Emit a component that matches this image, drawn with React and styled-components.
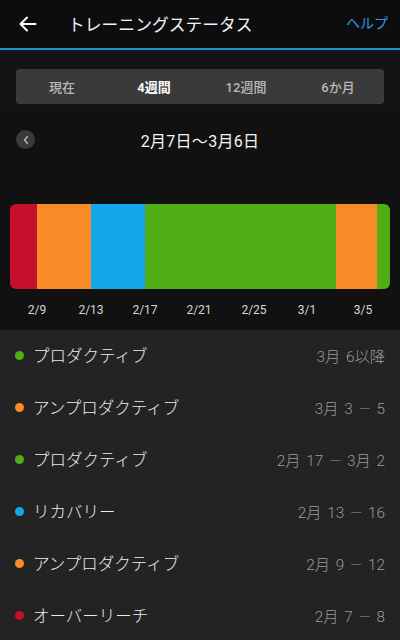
import React from "react";
import styled, { createGlobalStyle } from "styled-components";

const Global = createGlobalStyle`
  html, body { margin: 0; padding: 0; background: #111112; }
  body { font-family: Roboto, "Noto Sans CJK JP", sans-serif; }
  * { box-sizing: border-box; }
`;

const Page = styled.div`
  width: 400px;
  height: 640px;
  overflow: hidden;
  display: flex;
  flex-direction: column;
  background: #111112;
`;

const Header = styled.div`
  height: 48px;
  flex: none;
  display: flex;
  align-items: center;
  padding: 0 12px 0 18px;
  background: #0d0d0f;
  border-bottom: 2px solid #1e8fcf;
  box-sizing: content-box;
`;

const BackBtn = styled.div`
  width: 20px;
  height: 20px;
  display: flex;
  align-items: center;
  justify-content: center;
  margin-right: 30px;
`;

const Title = styled.div`
  flex: 1;
  color: #f2f2f2;
  font-size: 16.7px;
  letter-spacing: 0.1px;
`;

const Help = styled.div`
  color: #2b9bd9;
  font-size: 14px;
  margin-top: -4px;
`;

const TabsArea = styled.div`
  flex: none;
  background: #141416;
  padding: 19px 16px 8px;
`;

const Segmented = styled.div`
  height: 35px;
  border-radius: 4px;
  background: #3a3a3b;
  display: grid;
  grid-template-columns: repeat(4, 1fr);
  align-items: center;
`;

const Tab = styled.div`
  text-align: center;
  font-size: 13px;
  color: ${(p) => (p.$active ? "#ffffff" : "#b9b9b9")};
  font-weight: ${(p) => (p.$active ? 700 : 500)};
`;

const ChartArea = styled.div`
  flex: none;
  height: 218px;
  background: #111112;
  display: flex;
  flex-direction: column;
  padding: 16px 10px 0;
`;

const DateRow = styled.div`
  position: relative;
  height: 24px;
  display: flex;
  align-items: center;
  justify-content: center;
`;

const CircleBtn = styled.div`
  position: absolute;
  left: 6px;
  top: 2px;
  width: 19px;
  height: 19px;
  border-radius: 50%;
  background: #3a3a3b;
  display: flex;
  align-items: center;
  justify-content: center;
`;

const DateTitle = styled.div`
  color: #f5f5f5;
  font-size: 16px;
  letter-spacing: 0.3px;
`;

const Bar = styled.div`
  margin-top: 52px;
  height: 85px;
  border-radius: 6px;
  overflow: hidden;
  display: flex;
`;

const Segment = styled.div`
  height: 100%;
  background: ${(p) => p.$color};
`;

const Axis = styled.div`
  position: relative;
  height: 20px;
  margin-top: 14px;
`;

const Tick = styled.div`
  position: absolute;
  top: 0;
  transform: translateX(-50%);
  color: #d6d6d6;
  font-size: 12px;
  font-family: Roboto, sans-serif;
`;

const List = styled.div`
  flex: 1;
  background: #232323;
  display: flex;
  flex-direction: column;
`;

const Row = styled.div`
  height: 52px;
  flex: none;
  display: flex;
  align-items: center;
  padding: 0 15px 2px 15px;
`;

const Dot = styled.div`
  width: 9px;
  height: 9px;
  border-radius: 50%;
  background: ${(p) => p.$color};
  margin-right: 9px;
`;

const Label = styled.div`
  flex: 1;
  color: #ececec;
  font-family: "Noto Sans CJK JP", sans-serif;
  font-size: 16.5px;
  font-weight: 300;
`;

const Value = styled.div`
  color: #9a9a9a;
  font-family: Roboto, "Noto Sans CJK JP", sans-serif;
  font-size: 15.3px;
  font-weight: 300;
  word-spacing: 2px;
  white-space: pre;
`;

const Dash = styled.span`
  margin: 0 6px;
`;

const C = {
  red: "#c60f2b",
  orange: "#f88b25",
  blue: "#13a8ec",
  green: "#50ad14",
};

const segments = [
  { w: 27, c: C.red },
  { w: 54, c: C.orange },
  { w: 54, c: C.blue },
  { w: 191, c: C.green },
  { w: 41, c: C.orange },
  { w: 13, c: C.green },
];

const ticks = [
  ["2/9", 27],
  ["2/13", 81],
  ["2/17", 135],
  ["2/21", 189],
  ["2/25", 244],
  ["3/1", 297],
  ["3/5", 353],
];

const rows = [
  [C.green, "プロダクティブ", "3月 6以降", null],
  [C.orange, "アンプロダクティブ", "3月 3", "5"],
  [C.green, "プロダクティブ", "2月 17", "3月 2"],
  [C.blue, "リカバリー", "2月 13", "16"],
  [C.orange, "アンプロダクティブ", "2月 9", "12"],
  [C.red, "オーバーリーチ", "2月 7", "8"],
];

export default function App() {
  return (
    <Page>
      <Global />
      <Header>
        <BackBtn>
          <svg width="18" height="16" viewBox="0 0 18 16" fill="none" stroke="#ffffff" strokeWidth="2" strokeLinecap="round" strokeLinejoin="round">
            <path d="M16.5 8H2" />
            <path d="M8 1.5L1.5 8L8 14.5" />
          </svg>
        </BackBtn>
        <Title>トレーニングステータス</Title>
        <Help>ヘルプ</Help>
      </Header>
      <TabsArea>
        <Segmented>
          <Tab>現在</Tab>
          <Tab $active>4週間</Tab>
          <Tab>12週間</Tab>
          <Tab>6か月</Tab>
        </Segmented>
      </TabsArea>
      <ChartArea>
        <DateRow>
          <CircleBtn>
            <svg width="8" height="10" viewBox="0 0 8 10" fill="none" stroke="#bdbdbd" strokeWidth="1.3" strokeLinecap="round" strokeLinejoin="round">
              <path d="M5.5 1.5L2.5 5L5.5 8.5" />
            </svg>
          </CircleBtn>
          <DateTitle>2月7日〜3月6日</DateTitle>
        </DateRow>
        <Bar>
          {segments.map((s, i) => (
            <Segment key={i} $color={s.c} style={{ width: s.w }} />
          ))}
        </Bar>
        <Axis>
          {ticks.map(([t, x]) => (
            <Tick key={t} style={{ left: x }}>{t}</Tick>
          ))}
        </Axis>
      </ChartArea>
      <List>
        {rows.map(([c, l, a, b], i) => (
          <Row key={i}>
            <Dot $color={c} />
            <Label>{l}</Label>
            <Value>
              {a}
              {b !== null && (
                <>
                  <Dash>—</Dash>
                  {b}
                </>
              )}
            </Value>
          </Row>
        ))}
      </List>
    </Page>
  );
}
